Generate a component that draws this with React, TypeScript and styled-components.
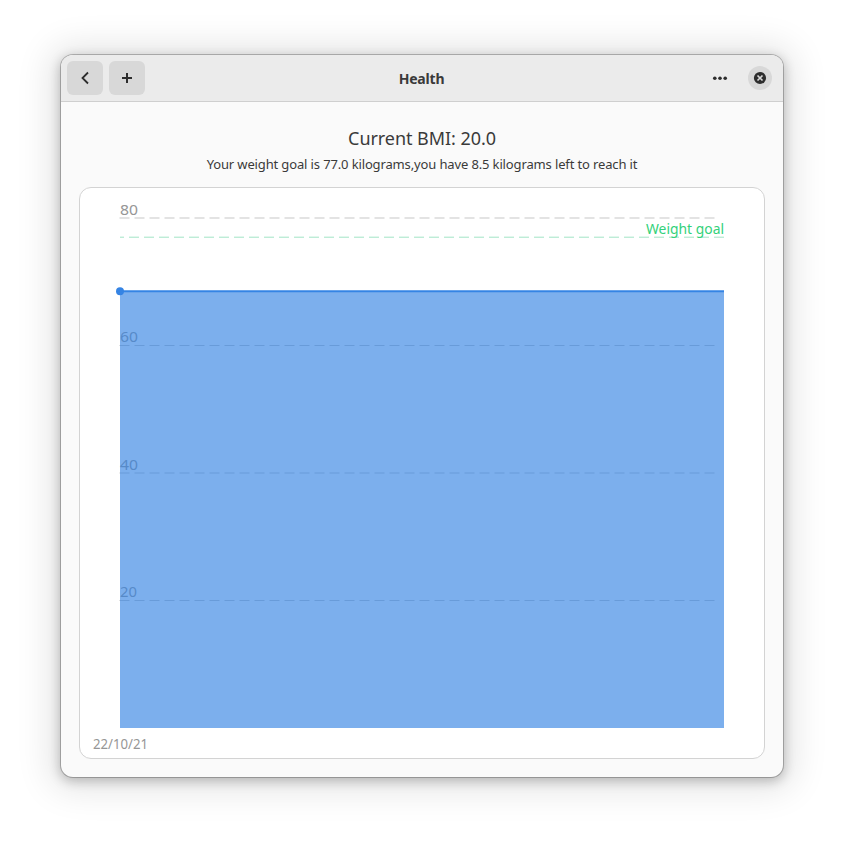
import React from "react";
import styled, { createGlobalStyle } from "styled-components";

const GlobalStyle = createGlobalStyle`
  * { box-sizing: border-box; }
  body { margin: 0; background: #fff; font-family: "Noto Sans", sans-serif; color: #3a3a3a; }
`;

const Desktop = styled.div`
  width: 844px;
  height: 844px;
  padding: 55px 61px 67px;
  overflow: hidden;
`;

const Window = styled.main`
  display: flex;
  flex-direction: column;
  height: 722px;
  border-radius: 12px;
  background: #fafafa;
  overflow: hidden;
  box-shadow: 0 0 0 1px rgba(0, 0, 0, 0.23), 0 3px 12px 1px rgba(0, 0, 0, 0.24),
    0 2px 34px 12px rgba(0, 0, 0, 0.1);
`;

const HeaderBar = styled.header`
  display: grid;
  grid-template-columns: 1fr auto 1fr;
  align-items: center;
  height: 47px;
  padding: 0 11px 0 6px;
  background: #ebebeb;
  border-bottom: 1px solid #cfcfcf;
`;

const Controls = styled.div<{ $end?: boolean }>`
  display: flex;
  align-items: center;
  gap: ${(p) => (p.$end ? 10 : 6)}px;
  justify-content: ${(p) => (p.$end ? "flex-end" : "flex-start")};
`;

const IconButton = styled.button<{ $flat?: boolean; $round?: boolean }>`
  display: grid;
  place-items: center;
  width: ${(p) => (p.$round ? 24 : 36)}px;
  height: ${(p) => (p.$round ? 24 : 34)}px;
  padding: 0;
  border: 0;
  border-radius: ${(p) => (p.$round ? "50%" : "6px")};
  background: ${(p) => (p.$flat ? "transparent" : "#d8d8d8")};
  color: #2d2d2d;
  svg { display: block; }
`;

const Title = styled.h1`
  margin: 0;
  padding: 2px 0 0 4px;
  font-size: 14px;
  line-height: 20px;
  font-weight: 700;
  letter-spacing: -0.2px;
`;

const Content = styled.section`
  display: flex;
  flex-direction: column;
  flex: 1;
  padding: 23px 18px 18px;
`;

const Summary = styled.div`
  display: flex;
  flex-direction: column;
  align-items: center;
  height: 62px;
`;

const Bmi = styled.h2`
  margin: 0;
  font-size: 18px;
  font-weight: 400;
  line-height: 26px;
  letter-spacing: -0.06px;
  white-space: nowrap;
`;

const GoalText = styled.p`
  margin: 3px 0 0;
  font-size: 13px;
  line-height: 20px;
  letter-spacing: -0.135px;
  white-space: nowrap;
`;

const Card = styled.div`
  height: 572px;
  border: 1px solid #d3d3d3;
  border-radius: 12px;
  background: #fff;
  overflow: hidden;
`;

const Chart = styled.svg`
  display: block;
  text { font-family: "Noto Sans", sans-serif; font-size: 14.5px; }
`;

const levels = [
  { value: 80, y: 218, baseline: 215, width: 18 },
  { value: 60, y: 345.5, baseline: 342, width: 18 },
  { value: 40, y: 473, baseline: 470, width: 18 },
  { value: 20, y: 600.5, baseline: 597, width: 17 },
];

function WeightChart() {
  return (
    <Chart width="684" height="570" viewBox="80 188 684 570">
      {levels.map(({ value, y, baseline, width }) => (
        <g key={value}>
          <path d={`M119.5 ${y}H715`} stroke="#000" strokeOpacity=".22" strokeDasharray="10 5" />
          <text x="120" y={baseline} fill="#969696" textLength={width} lengthAdjust="spacingAndGlyphs">{value}</text>
        </g>
      ))}
      <path d="M724 237.2H120" stroke="#2ec27e" strokeOpacity=".45" strokeDasharray="10 5" />
      <text x="646" y="234" fill="#33d17a" textLength="78" lengthAdjust="spacingAndGlyphs">Weight goal</text>
      <path d="M120 291.3H724V728H120Z" fill="#3584e4" fillOpacity=".65" />
      <path d="M120 291.3H724" stroke="#3584e4" strokeWidth="2" />
      <circle cx="120" cy="291.3" r="4" fill="#3584e4" />
      <text x="93" y="749" fill="#969696" textLength="55" lengthAdjust="spacingAndGlyphs">22/10/21</text>
    </Chart>
  );
}

export default function App() {
  return (
    <>
      <GlobalStyle />
      <Desktop>
        <Window>
          <HeaderBar>
            <Controls>
              <IconButton aria-label="Back">
                <svg width="16" height="16" fill="none" stroke="currentColor" strokeWidth="1.8">
                  <path d="M11 2.5 5.5 8l5.5 5.5" />
                </svg>
              </IconButton>
              <IconButton aria-label="Add">
                <svg width="16" height="16" fill="none" stroke="currentColor" strokeWidth="2">
                  <path d="M8 3v10M3 8h10" />
                </svg>
              </IconButton>
            </Controls>
            <Title>Health</Title>
            <Controls $end>
              <IconButton $flat aria-label="Menu">
                <svg width="16" height="16" fill="currentColor">
                  <circle cx="2.8" cy="8.2" r="1.8" />
                  <circle cx="8" cy="8.2" r="1.8" />
                  <circle cx="13.2" cy="8.2" r="1.8" />
                </svg>
              </IconButton>
              <IconButton $round aria-label="Close">
                <svg width="16" height="16">
                  <circle cx="8" cy="8" r="6.1" fill="currentColor" />
                  <path d="m5.5 5.5 5 5m0-5-5 5" stroke="#d8d8d8" strokeWidth="1.7" />
                </svg>
              </IconButton>
            </Controls>
          </HeaderBar>
          <Content>
            <Summary>
              <Bmi>Current BMI: 20.0</Bmi>
              <GoalText>Your weight goal is 77.0 kilograms,you have 8.5 kilograms left to reach it</GoalText>
            </Summary>
            <Card>
              <WeightChart />
            </Card>
          </Content>
        </Window>
      </Desktop>
    </>
  );
}
